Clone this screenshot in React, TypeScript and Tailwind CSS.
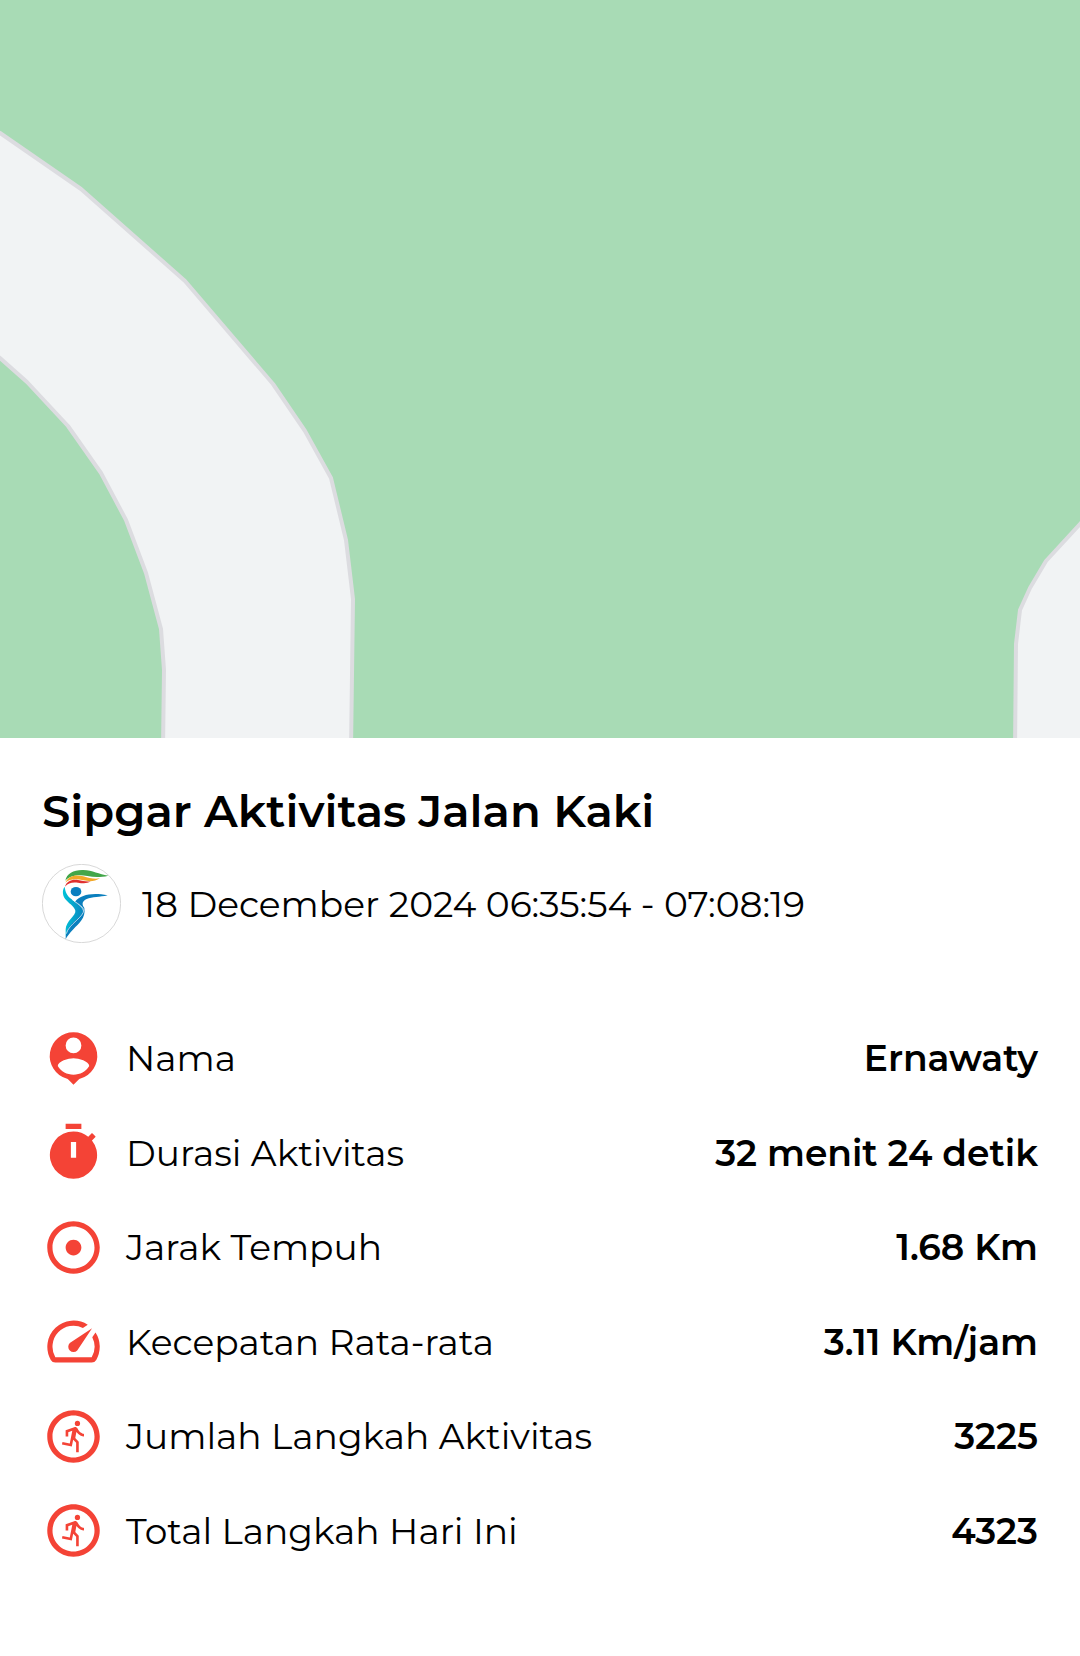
import type { ReactNode } from 'react';
import { MdAdjust, MdOutlineRunCircle, MdSpeed } from 'react-icons/md';

type Stat = {
  label: string;
  value: string;
  icon: ReactNode;
};

function PersonPin() {
  return (
    <svg viewBox="0 0 24 24" fill="currentColor" fillRule="evenodd" className="size-full">
      <path d="M12 2a9 9 0 0 0-2.7 17.6c.4.1.6.3.9.6L12 22l1.8-1.8c.3-.3.5-.5.9-.6A9 9 0 0 0 12 2zm0 2a3 3 0 1 1 0 6 3 3 0 0 1 0-6zm0 14.2c-2.5 0-4.7-1.2-6-3.3.1-1.9 4-3 6-3s5.9 1.1 6 3c-1.3 2.1-3.5 3.3-6 3.3z" />
    </svg>
  );
}

function Timer() {
  return (
    <svg viewBox="0 0 24 24" fill="currentColor" fillRule="evenodd" className="size-full">
      <path d="M9 1h6v2H9zM19.03 7.39l1.42-1.42c-.43-.51-.9-.99-1.41-1.41l-1.42 1.42A8.96 8.96 0 0 0 12 4a9 9 0 1 0 7.03 3.39zM13 14h-2V8h2z" />
    </svg>
  );
}

const STATS: Stat[] = [
  { label: 'Nama', value: 'Ernawaty', icon: <PersonPin /> },
  { label: 'Durasi Aktivitas', value: '32 menit 24 detik', icon: <Timer /> },
  { label: 'Jarak Tempuh', value: '1.68 Km', icon: <MdAdjust className="size-full" /> },
  { label: 'Kecepatan Rata-rata', value: '3.11 Km/jam', icon: <MdSpeed className="size-full" /> },
  { label: 'Jumlah Langkah Aktivitas', value: '3225', icon: <MdOutlineRunCircle className="size-full" /> },
  { label: 'Total Langkah Hari Ini', value: '4323', icon: <MdOutlineRunCircle className="size-full" /> },
];

function RouteMap() {
  return (
    <svg
      viewBox="0 0 1080 738"
      preserveAspectRatio="xMidYMid slice"
      className="block w-full bg-[#a8dbb5]"
      role="img"
      aria-label="Peta aktivitas"
    >
      <g fill="#f1f3f4" stroke="#dcdce0" strokeWidth="4" strokeLinejoin="round">
        <path d="M-10 127 0 133 81 189 185 281 273 384 305 431 331 478 346 540 353 599 351 750H163L164 670 161 629 146 573 126 520 101 473 68 426 27 382 0 358-10 350z" />
        <path d="M1090 513 1080 524 1046 561 1030 588 1020 610 1016 644 1015 750H1090z" />
      </g>
    </svg>
  );
}

/* Sipgar: figür penari dengan obor */
function SipgarLogo() {
  return (
    <svg viewBox="36 42 237 237" className="size-[79px] shrink-0" role="img" aria-label="Sipgar">
      <defs>
        <linearGradient id="body" x1="0" y1="0" x2="1" y2="0">
          <stop offset="0" stopColor="#00c4d8" />
          <stop offset="1" stopColor="#0a86c0" />
        </linearGradient>
      </defs>
      <circle cx="154.5" cy="160.5" r="117.5" fill="#fff" stroke="#c4c4c4" strokeWidth="2" />
      <path d="M106 92C110 70 132 59 160 60C188 61 206 73 235 77C210 83 192 82 172 78C146 73 120 76 106 92z" fill="#43a649" />
      <path d="M106 98C116 76 136 73 160 79C178 84 192 88 210 85C194 95 178 95 160 91C138 86 118 87 106 98z" fill="#f2a929" />
      <path d="M105 110C110 93 126 87 144 90C158 92 168 96 182 94C170 102 158 100 144 98C126 96 114 99 105 110z" fill="#e0302f" />
      <ellipse cx="138" cy="125" rx="16" ry="14" fill="#0a7fc0" />
      <path d="M104 110C95 122 98 139 109 151C121 164 133 170 136 182C139 196 107 213 107 238L107 258C115 235 148 214 159 189C163 174 141 161 125 148C111 137 106 126 104 110z" fill="url(#body)" />
      <path d="M135 155C153 135 184 127 233 136C209 142 187 140 170 147C157 153 154 162 163 174C168 205 146 220 130 238C119 250 111 260 107 268C106 242 120 226 137 211C151 199 162 187 158 176C153 167 143 162 135 155z" fill="#0a7fbe" />
      <path d="M126 148C140 160 157 167 161 179C164 200 116 222 109 251" fill="none" stroke="#fff" strokeWidth="2" />
    </svg>
  );
}

export default function App() {
  return (
    <main className="min-h-screen bg-white font-[Montserrat,Inter,sans-serif] text-black">
      <RouteMap />

      <section className="px-[42px] pt-10">
        <h1 className="text-[45px] leading-[66px] font-semibold">Sipgar Aktivitas Jalan Kaki</h1>
        <div className="mt-5 flex items-center gap-[21px]">
          <SipgarLogo />
          <p className="text-4xl font-normal">18 December 2024 06:35:54 - 07:08:19</p>
        </div>

        <dl className="mt-[68px] grid min-h-[567px] auto-rows-fr">
          {STATS.map((stat) => (
            <div key={stat.label} className="flex items-center justify-between gap-4">
              <dt className="flex items-center gap-[21px] text-4xl font-normal">
                <span className="size-[63px] shrink-0 text-[#f44336]" aria-hidden="true">
                  {stat.icon}
                </span>
                {stat.label}
              </dt>
              <dd className="text-right text-4xl font-semibold">{stat.value}</dd>
            </div>
          ))}
        </dl>
      </section>
    </main>
  );
}
